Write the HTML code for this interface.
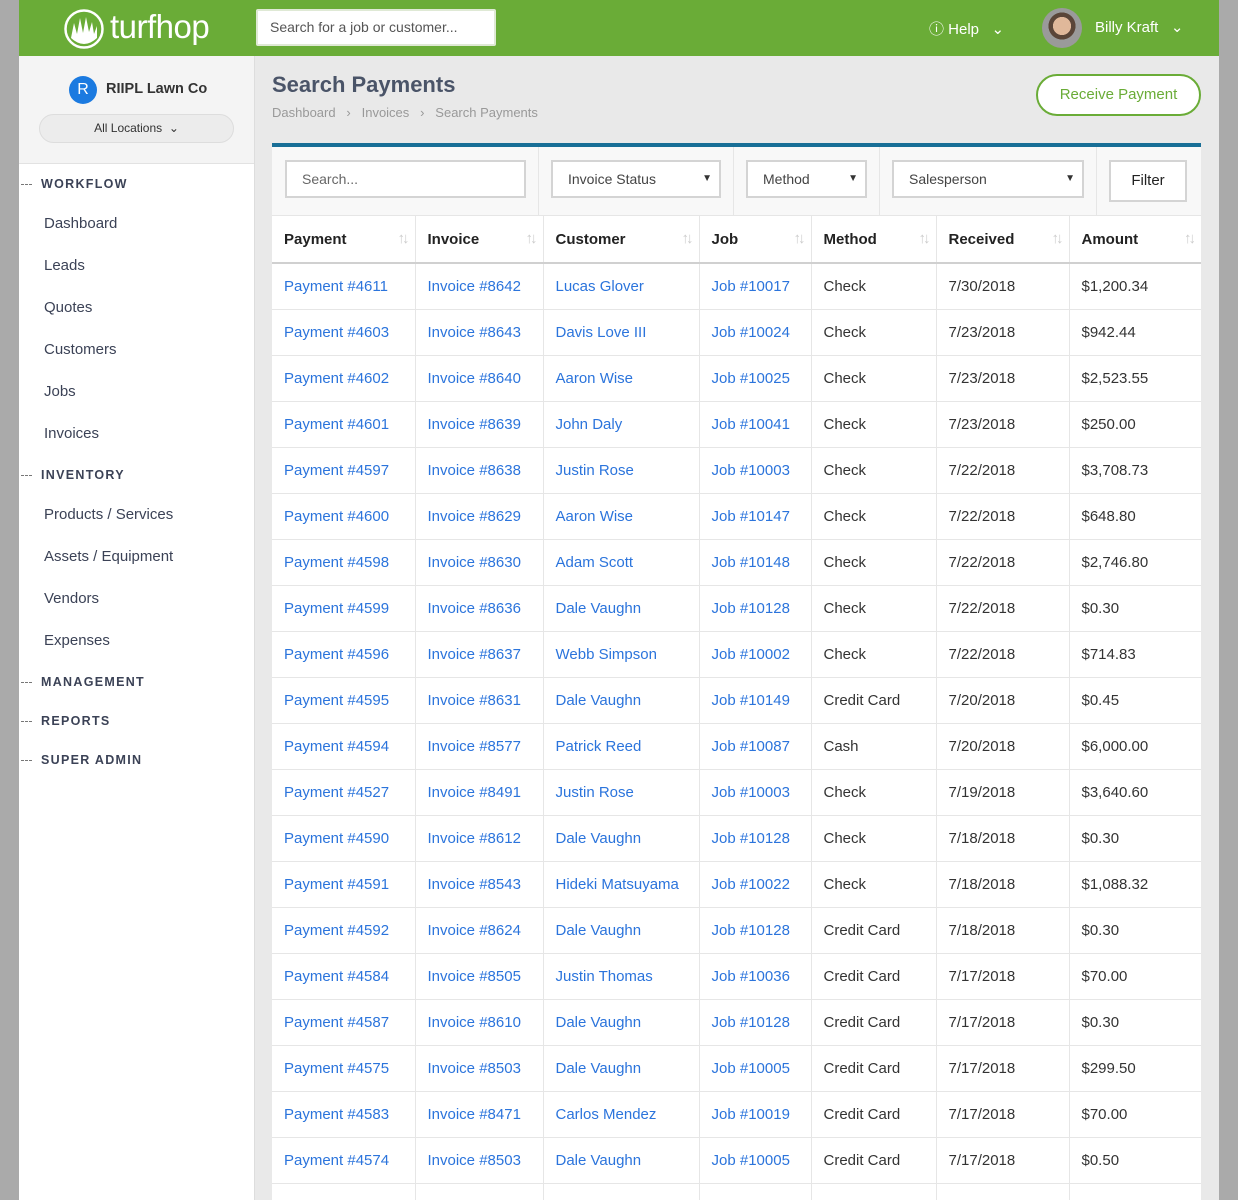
<!DOCTYPE html>
<html style="width:1238px;height:1200px;overflow:hidden"><head><meta charset="utf-8"><style>
*{box-sizing:border-box;margin:0;padding:0}
body{width:1238px;height:1200px;overflow:hidden;background:#aaa;font-family:"Liberation Sans",sans-serif;position:relative}
.abs{position:absolute}
#hdr{left:19px;top:0;width:1200px;height:56px;background:#6aac37}
#side{left:19px;top:56px;width:236px;height:1144px;background:#fff;border-right:1px solid #ddd}
#sidetop{left:0;top:0;width:235px;height:108px;background:#f4f4f4;border-bottom:1px solid #e2e2e2}
#main{left:255px;top:56px;width:964px;height:1144px;background:#e9e9e9;overflow:hidden}
.sec{position:absolute;left:22px;font-size:12.5px;letter-spacing:1.3px;font-weight:bold;color:#3b4256}
.sec:before{content:"";position:absolute;left:-20px;top:7px;width:11px;border-top:1px dashed #777}
.item{position:absolute;left:25px;font-size:15px;color:#3b4256}
table{border-collapse:collapse;table-layout:fixed;font-size:15px}
td,th{border-right:1px solid #e6e6e6;padding:0 12px;text-align:left;white-space:nowrap}
td:last-child,th:last-child{border-right:none}
th{height:47px;font-weight:bold;color:#222;border-bottom:2px solid #d0d0d0;position:relative}
th span{position:absolute;right:8px;top:14px;color:#ccc;font-size:15px;font-weight:normal;letter-spacing:-3px}
td{height:46px;border-bottom:1px solid #e6e6e6;color:#333}
td a{color:#2b74dc;text-decoration:none}
.inp{position:absolute;border:2px solid #d4d4d4;background:#fff;font-size:14px;color:#444;padding-left:15px;line-height:34px;height:38px}
.inp i{position:absolute;right:7px;top:0;font-style:normal;font-size:10px;color:#333}
</style></head><body>
<div id="hdr" class="abs">
  <svg class="abs" style="left:44px;top:8px" width="42" height="42" viewBox="0 0 42 42"><circle cx="21" cy="21" r="18.5" fill="none" stroke="#fff" stroke-width="2.5"/><path d="M8 30 L11 15 L14 26 L17 10 L20 25 L23 9 L26 24 L29 14 L31 26 L34 18 L34 30 Q21 42 8 30Z" fill="#fff"/></svg>
  <div class="abs" style="left:91px;top:8px;font-size:33px;color:#fff;letter-spacing:-0.5px">turfhop</div>
  <div class="abs" style="left:237px;top:9px;width:240px;height:37px;background:#fff;border:2px solid #dfe9d5;border-radius:2px;font-size:14px;color:#555;padding-left:12px;line-height:33px">Search for a job or customer...</div>
  <div class="abs" style="left:910px;top:18px;color:#fff;font-size:15px">&#9432; Help &nbsp;&nbsp;&#8964;</div>
  <div class="abs" style="left:1023px;top:8px;width:40px;height:40px;border-radius:50%;background:radial-gradient(circle at 50% 45%,#e0b89a 0 30%,#5a4538 31% 45%,#9a9a9a 46%)"></div>
  <div class="abs" style="left:1076px;top:18px;color:#fff;font-size:15px">Billy Kraft &nbsp;&nbsp;&#8964;</div>
</div>
<div id="side" class="abs">
  <div id="sidetop" class="abs">
    <div class="abs" style="left:50px;top:20px;width:28px;height:28px;border-radius:50%;background:#1b7ae0;color:#fff;text-align:center;line-height:28px;font-size:16px">R</div>
    <div class="abs" style="left:87px;top:25px;font-size:14.5px;font-weight:bold;color:#333">RIIPL Lawn Co</div>
    <div class="abs" style="left:20px;top:58px;width:195px;height:29px;border:1px solid #ddd;border-radius:15px;background:#ececec;text-align:center;font-size:12px;line-height:27px;color:#333">All Locations &nbsp;&#8964;</div>
  </div>
  <div class="sec" style="top:121px">WORKFLOW</div>
  <div class="item" style="top:159px">Dashboard</div>
  <div class="item" style="top:201px">Leads</div>
  <div class="item" style="top:243px">Quotes</div>
  <div class="item" style="top:285px">Customers</div>
  <div class="item" style="top:327px">Jobs</div>
  <div class="item" style="top:369px">Invoices</div>
  <div class="sec" style="top:412px">INVENTORY</div>
  <div class="item" style="top:450px">Products / Services</div>
  <div class="item" style="top:492px">Assets / Equipment</div>
  <div class="item" style="top:534px">Vendors</div>
  <div class="item" style="top:576px">Expenses</div>
  <div class="sec" style="top:619px">MANAGEMENT</div>
  <div class="sec" style="top:658px">REPORTS</div>
  <div class="sec" style="top:697px">SUPER ADMIN</div>
</div>
<div id="main" class="abs">
  <div class="abs" style="left:17px;top:16px;font-size:22px;font-weight:bold;color:#4a5468">Search Payments</div>
  <div class="abs" style="left:17px;top:49px;font-size:13px;color:#999">Dashboard &nbsp;&nbsp;&#8250;&nbsp;&nbsp; Invoices &nbsp;&nbsp;&#8250;&nbsp;&nbsp; Search Payments</div>
  <div class="abs" style="left:781px;top:18px;width:165px;height:42px;border:2px solid #6aac37;border-radius:21px;background:#fff;color:#6aac37;font-size:15px;text-align:center;line-height:38px">Receive Payment</div>
  <div class="abs" style="left:17px;top:87px;width:929px;height:1057px;background:#fff;border-top:4px solid #186e96;overflow:hidden">
    <div class="abs" style="left:0;top:0;width:929px;height:69px;background:#f8f8f8;border-bottom:1px solid #e6e6e6">
      <div class="abs" style="left:266px;top:0;height:69px;border-left:1px solid #e6e6e6"></div>
      <div class="abs" style="left:461px;top:0;height:69px;border-left:1px solid #e6e6e6"></div>
      <div class="abs" style="left:607px;top:0;height:69px;border-left:1px solid #e6e6e6"></div>
      <div class="abs" style="left:824px;top:0;height:69px;border-left:1px solid #e6e6e6"></div>
      <div class="inp" style="left:13px;top:13px;width:241px;color:#666">Search...</div>
      <div class="inp" style="left:279px;top:13px;width:170px">Invoice Status<i>&#9660;</i></div>
      <div class="inp" style="left:474px;top:13px;width:121px">Method<i>&#9660;</i></div>
      <div class="inp" style="left:620px;top:13px;width:192px">Salesperson<i>&#9660;</i></div>
      <div class="inp" style="left:837px;top:13px;width:78px;height:42px;line-height:38px;padding:0;text-align:center;font-size:15px;color:#222">Filter</div>
    </div>
    <table class="abs" style="left:0;top:69px;width:929px">
      <colgroup><col style="width:143px"><col style="width:128px"><col style="width:156px"><col style="width:112px"><col style="width:125px"><col style="width:133px"><col style="width:132px"></colgroup>
      <tr><th>Payment<span>↑↓</span></th><th>Invoice<span>↑↓</span></th><th>Customer<span>↑↓</span></th><th>Job<span>↑↓</span></th><th>Method<span>↑↓</span></th><th>Received<span>↑↓</span></th><th>Amount<span>↑↓</span></th></tr>
      <tr><td><a>Payment #4611</a></td><td><a>Invoice #8642</a></td><td><a>Lucas Glover</a></td><td><a>Job #10017</a></td><td>Check</td><td>7/30/2018</td><td>$1,200.34</td></tr>
      <tr><td><a>Payment #4603</a></td><td><a>Invoice #8643</a></td><td><a>Davis Love III</a></td><td><a>Job #10024</a></td><td>Check</td><td>7/23/2018</td><td>$942.44</td></tr>
      <tr><td><a>Payment #4602</a></td><td><a>Invoice #8640</a></td><td><a>Aaron Wise</a></td><td><a>Job #10025</a></td><td>Check</td><td>7/23/2018</td><td>$2,523.55</td></tr>
      <tr><td><a>Payment #4601</a></td><td><a>Invoice #8639</a></td><td><a>John Daly</a></td><td><a>Job #10041</a></td><td>Check</td><td>7/23/2018</td><td>$250.00</td></tr>
      <tr><td><a>Payment #4597</a></td><td><a>Invoice #8638</a></td><td><a>Justin Rose</a></td><td><a>Job #10003</a></td><td>Check</td><td>7/22/2018</td><td>$3,708.73</td></tr>
      <tr><td><a>Payment #4600</a></td><td><a>Invoice #8629</a></td><td><a>Aaron Wise</a></td><td><a>Job #10147</a></td><td>Check</td><td>7/22/2018</td><td>$648.80</td></tr>
      <tr><td><a>Payment #4598</a></td><td><a>Invoice #8630</a></td><td><a>Adam Scott</a></td><td><a>Job #10148</a></td><td>Check</td><td>7/22/2018</td><td>$2,746.80</td></tr>
      <tr><td><a>Payment #4599</a></td><td><a>Invoice #8636</a></td><td><a>Dale Vaughn</a></td><td><a>Job #10128</a></td><td>Check</td><td>7/22/2018</td><td>$0.30</td></tr>
      <tr><td><a>Payment #4596</a></td><td><a>Invoice #8637</a></td><td><a>Webb Simpson</a></td><td><a>Job #10002</a></td><td>Check</td><td>7/22/2018</td><td>$714.83</td></tr>
      <tr><td><a>Payment #4595</a></td><td><a>Invoice #8631</a></td><td><a>Dale Vaughn</a></td><td><a>Job #10149</a></td><td>Credit Card</td><td>7/20/2018</td><td>$0.45</td></tr>
      <tr><td><a>Payment #4594</a></td><td><a>Invoice #8577</a></td><td><a>Patrick Reed</a></td><td><a>Job #10087</a></td><td>Cash</td><td>7/20/2018</td><td>$6,000.00</td></tr>
      <tr><td><a>Payment #4527</a></td><td><a>Invoice #8491</a></td><td><a>Justin Rose</a></td><td><a>Job #10003</a></td><td>Check</td><td>7/19/2018</td><td>$3,640.60</td></tr>
      <tr><td><a>Payment #4590</a></td><td><a>Invoice #8612</a></td><td><a>Dale Vaughn</a></td><td><a>Job #10128</a></td><td>Check</td><td>7/18/2018</td><td>$0.30</td></tr>
      <tr><td><a>Payment #4591</a></td><td><a>Invoice #8543</a></td><td><a>Hideki Matsuyama</a></td><td><a>Job #10022</a></td><td>Check</td><td>7/18/2018</td><td>$1,088.32</td></tr>
      <tr><td><a>Payment #4592</a></td><td><a>Invoice #8624</a></td><td><a>Dale Vaughn</a></td><td><a>Job #10128</a></td><td>Credit Card</td><td>7/18/2018</td><td>$0.30</td></tr>
      <tr><td><a>Payment #4584</a></td><td><a>Invoice #8505</a></td><td><a>Justin Thomas</a></td><td><a>Job #10036</a></td><td>Credit Card</td><td>7/17/2018</td><td>$70.00</td></tr>
      <tr><td><a>Payment #4587</a></td><td><a>Invoice #8610</a></td><td><a>Dale Vaughn</a></td><td><a>Job #10128</a></td><td>Credit Card</td><td>7/17/2018</td><td>$0.30</td></tr>
      <tr><td><a>Payment #4575</a></td><td><a>Invoice #8503</a></td><td><a>Dale Vaughn</a></td><td><a>Job #10005</a></td><td>Credit Card</td><td>7/17/2018</td><td>$299.50</td></tr>
      <tr><td><a>Payment #4583</a></td><td><a>Invoice #8471</a></td><td><a>Carlos Mendez</a></td><td><a>Job #10019</a></td><td>Credit Card</td><td>7/17/2018</td><td>$70.00</td></tr>
      <tr><td><a>Payment #4574</a></td><td><a>Invoice #8503</a></td><td><a>Dale Vaughn</a></td><td><a>Job #10005</a></td><td>Credit Card</td><td>7/17/2018</td><td>$0.50</td></tr>
      <tr><td></td><td></td><td></td><td></td><td></td><td></td><td></td></tr>
    </table>
  </div>
</div>
</body></html>
